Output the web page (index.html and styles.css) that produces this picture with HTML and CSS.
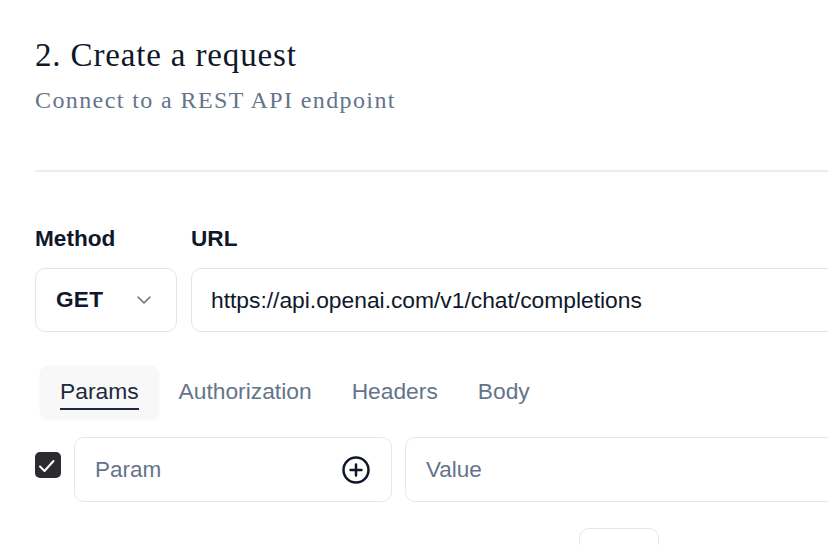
FILE: index.html
```html
<!DOCTYPE html>
<html lang="en">
<head>
    <meta charset="UTF-8">
    <title>Create a request</title>
    <link rel="stylesheet" href="styles.css">
</head>
<body>
    <div class="page">
        <header class="step-header">
            <h2 class="step-title">2. Create a request</h2>
            <p class="step-subtitle">Connect to a REST API endpoint</p>
        </header>

        <hr class="divider">

        <!-- Method + URL -->
        <div class="request-line">
            <div class="field method-field">
                <label class="field-label">Method</label>
                <div class="select-box">
                    <span class="select-value">GET</span>
                    <svg class="chevron" width="16" height="10" viewBox="0 0 16 10" fill="none">
                        <path d="M2 2l6 6 6-6" stroke="#71717a" stroke-width="1.6" stroke-linecap="round" stroke-linejoin="round"/>
                    </svg>
                </div>
            </div>
            <div class="field url-field">
                <label class="field-label">URL</label>
                <div class="input-box url-box">https://api.openai.com/v1/chat/completions</div>
            </div>
        </div>

        <!-- Tabs -->
        <ul class="tab-list">
            <li class="tab active"><span>Params</span></li>
            <li class="tab"><span>Authorization</span></li>
            <li class="tab"><span>Headers</span></li>
            <li class="tab"><span>Body</span></li>
        </ul>

        <!-- Param row -->
        <div class="param-row">
            <div class="checkbox">
                <svg width="26" height="26" viewBox="0 0 26 26" fill="none">
                    <path d="M5 14.5l4.5 4.5 9-10" stroke="#fff" stroke-width="2" stroke-linecap="round" stroke-linejoin="round"/>
                </svg>
            </div>
            <div class="input-box param-box">
                <span class="placeholder">Param</span>
                <svg class="plus-icon" width="30" height="30" viewBox="0 0 24 24" fill="none" stroke="#0f172a" stroke-width="2" stroke-linecap="round">
                    <circle cx="12" cy="12" r="10"/>
                    <path d="M7.6 12h8.8M12 7.6v8.8"/>
                </svg>
            </div>
            <div class="input-box value-box">
                <span class="placeholder">Value</span>
            </div>
        </div>

        <div class="row-actions">
            <div class="ghost-button"></div>
        </div>
    </div>
</body>
</html>
```

FILE: styles.css
```css
:root {
    --text-primary: #0f172a;
    --text-muted: #64748b;
    --border: #e2e8f0;
    --tab-bg: #f8f8f9;
}

* {
    margin: 0;
    padding: 0;
    box-sizing: border-box;
}

body {
    margin: 0;
    background: #ffffff;
    font-family: "Liberation Sans", Arial, sans-serif;
    color: var(--text-primary);
    overflow: hidden;
}

.page {
    width: 1203px;
    padding: 35px 0 0 35px;
}

/* Header */
.step-title {
    font-family: "Liberation Serif", "Times New Roman", serif;
    font-weight: 400;
    font-size: 33px;
    line-height: 40px;
    letter-spacing: 0.85px;
    color: var(--text-primary);
}

.step-subtitle {
    margin-top: 9px;
    font-family: "Liberation Serif", "Times New Roman", serif;
    font-size: 24px;
    line-height: 32px;
    letter-spacing: 1.4px;
    color: var(--text-muted);
}

.divider {
    margin-top: 54px;
    border: none;
    border-top: 2px solid #e8edf3;
}

/* Method + URL */
.request-line {
    display: flex;
    gap: 14px;
    margin-top: 54px;
}

.field {
    display: flex;
    flex-direction: column;
    gap: 16px;
}

.url-field {
    flex: 1;
}

.field-label {
    font-weight: 700;
    font-size: 22.6px;
    line-height: 26px;
    color: var(--text-primary);
}

.select-box {
    width: 142px;
    height: 64px;
    border: 1px solid #e4e4ea;
    border-radius: 10px;
    display: flex;
    align-items: center;
    justify-content: space-between;
    padding: 0 24px 0 20px;
}

.select-value {
    font-weight: 700;
    font-size: 22.6px;
    letter-spacing: 0.3px;
}

.input-box {
    height: 64px;
    border: 1px solid var(--border);
    border-radius: 10px;
    display: flex;
    align-items: center;
    padding: 0 20px 0 19px;
    font-size: 22.5px;
}

.url-box {
    border-color: #e4e4ea;
    color: var(--text-primary);
    font-size: 22.8px;
}

/* Tabs */
.tab-list {
    list-style-type: none;
    display: flex;
    padding: 5px;
    margin-top: 29px;
}

.tab {
    padding: 12px 20px 9px;
    border-radius: 8px;
    font-size: 22.8px;
    color: var(--text-muted);
}

.tab span {
    display: block;
    line-height: 26px;
    padding-bottom: 4px;
    border-bottom: 2px solid transparent;
}

.tab.active {
    background: var(--tab-bg);
    box-shadow: 0 1px 3px rgba(0, 0, 0, 0.04);
    color: #1e293b;
}

.tab.active span {
    border-bottom-color: #1e293b;
}

/* Param row */
.param-row {
    display: flex;
    align-items: flex-start;
    gap: 13px;
    margin-top: 13px;
}

.checkbox {
    width: 26px;
    height: 26px;
    margin-top: 15px;
    border-radius: 5px;
    background: #2b2b31;
    flex-shrink: 0;
}

.checkbox svg {
    display: block;
}

.param-box {
    width: 318px;
    height: 65px;
    justify-content: space-between;
    padding: 0 20px;
}

.value-box {
    flex: 1;
    height: 65px;
    padding-left: 20px;
}

.placeholder {
    color: var(--text-muted);
}

.plus-icon {
    display: block;
}

.row-actions {
    display: flex;
    justify-content: center;
    margin-top: 26px;
}

.ghost-button {
    width: 80px;
    height: 50px;
    border: 1px solid var(--border);
    border-radius: 10px;
}
```
